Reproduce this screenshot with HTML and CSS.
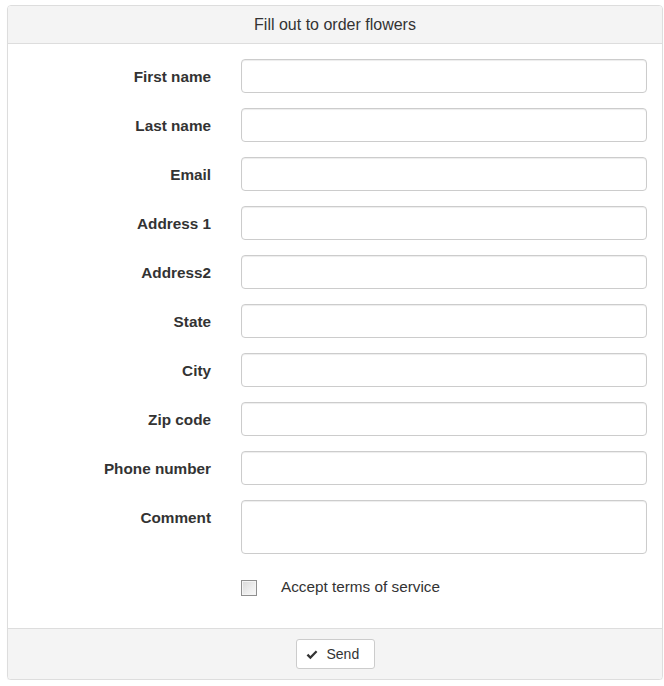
FILE: index.html
```html
<!DOCTYPE html>
<html>
<head>
<meta charset="utf-8">
<link rel="stylesheet" href="styles.css">
</head>
<body>
<div class="page">
  <form class="panel">
    <div class="panel-heading">Fill out to order flowers</div>
    <div class="panel-body">
      <div class="form-row"><label class="label">First name</label><input class="control" type="text"></div>
      <div class="form-row"><label class="label">Last name</label><input class="control" type="text"></div>
      <div class="form-row"><label class="label">Email</label><input class="control" type="text"></div>
      <div class="form-row"><label class="label">Address 1</label><input class="control" type="text"></div>
      <div class="form-row"><label class="label">Address2</label><input class="control" type="text"></div>
      <div class="form-row"><label class="label">State</label><input class="control" type="text"></div>
      <div class="form-row"><label class="label">City</label><input class="control" type="text"></div>
      <div class="form-row"><label class="label">Zip code</label><input class="control" type="text"></div>
      <div class="form-row"><label class="label">Phone number</label><input class="control" type="text"></div>
      <div class="form-row"><label class="label">Comment</label><textarea class="control area"></textarea></div>
      <div class="form-row check-row">
        <span></span>
        <label class="check"><span class="box"></span><span class="check-text">Accept terms of service</span></label>
      </div>
    </div>
    <div class="panel-footer">
      <button class="btn" type="button"><svg class="ok" width="12" height="10" viewBox="0 0 12 10"><path d="M0.6 5.4 L2.3 3.7 L4.4 5.9 L9.8 0.4 L11.4 2.1 L4.4 9.2 Z" fill="#333"/></svg><span>Send</span></button>
    </div>
  </form>
</div>
</body>
</html>
```

FILE: styles.css
```css
* { box-sizing: border-box; }
html, body { margin: 0; padding: 0; background: #fff; }
body {
  font-family: "Liberation Sans", Arial, Helvetica, sans-serif;
  font-size: 14px;
  line-height: 20px;
  color: #333;
}
.page {
  padding: 5px 0 0 7px;
}
.panel {
  width: 656px;
  margin: 0;
  border: 1px solid #ddd;
  border-radius: 4px;
  background: #fff;
  box-shadow: 0 1px 1px rgba(0,0,0,0.05);
}
.panel-heading {
  background: #f4f4f4;
  border-bottom: 1px solid #ddd;
  border-radius: 3px 3px 0 0;
  height: 38px;
  padding: 10px 15px 0;
  text-align: center;
  font-size: 16px;
  line-height: 18px;
  color: #333;
}
.panel-body {
  padding: 15px 15px 15px 15px;
}
.form-row {
  display: grid;
  grid-template-columns: 188px 1fr;
  column-gap: 30px;
  margin-bottom: 15px;
}
.label {
  text-align: right;
  font-weight: bold;
  font-size: 15.3px;
  padding-top: 8px;
  line-height: 20px;
}
.control {
  display: block;
  width: 100%;
  height: 34px;
  border: 1px solid #ccc;
  border-radius: 4px;
  box-shadow: inset 0 1px 1px rgba(0,0,0,0.075);
  background: #fff;
  font-family: inherit;
  font-size: 14px;
  padding: 6px 12px;
  margin: 0;
}
.area {
  height: 54px;
  resize: none;
}
.check-row {
  height: 29px;
  padding-top: 8px;
  margin-bottom: 15px;
}
.check {
  display: flex;
  align-items: center;
  height: 20px;
  font-weight: normal;
}
.box {
  width: 16px;
  height: 16px;
  border: 1px solid #8f8f8f;
  background: linear-gradient(135deg, #d8d8d8 0%, #eeeeee 60%, #f8f8f8 100%);
  box-shadow: inset 0 0 0 1px #f4f4f4;
  margin-top: 2px;
  flex: none;
}
.check-text {
  margin-left: 24px;
  font-size: 15.3px;
}
.panel-footer {
  background: #f4f4f4;
  border-top: 1px solid #ddd;
  border-radius: 0 0 3px 3px;
  padding: 10px 15px;
  display: flex;
  justify-content: center;
}
.btn {
  display: flex;
  align-items: center;
  height: 30px;
  width: 79px;
  padding: 0 0 0 9px;
  border: 1px solid #ccc;
  border-radius: 3px;
  background: #fff;
  font-family: inherit;
  font-size: 14px;
  color: #333;
  margin: 0;
}
.ok {
  margin-right: 9px;
  margin-top: 1px;
}
```
